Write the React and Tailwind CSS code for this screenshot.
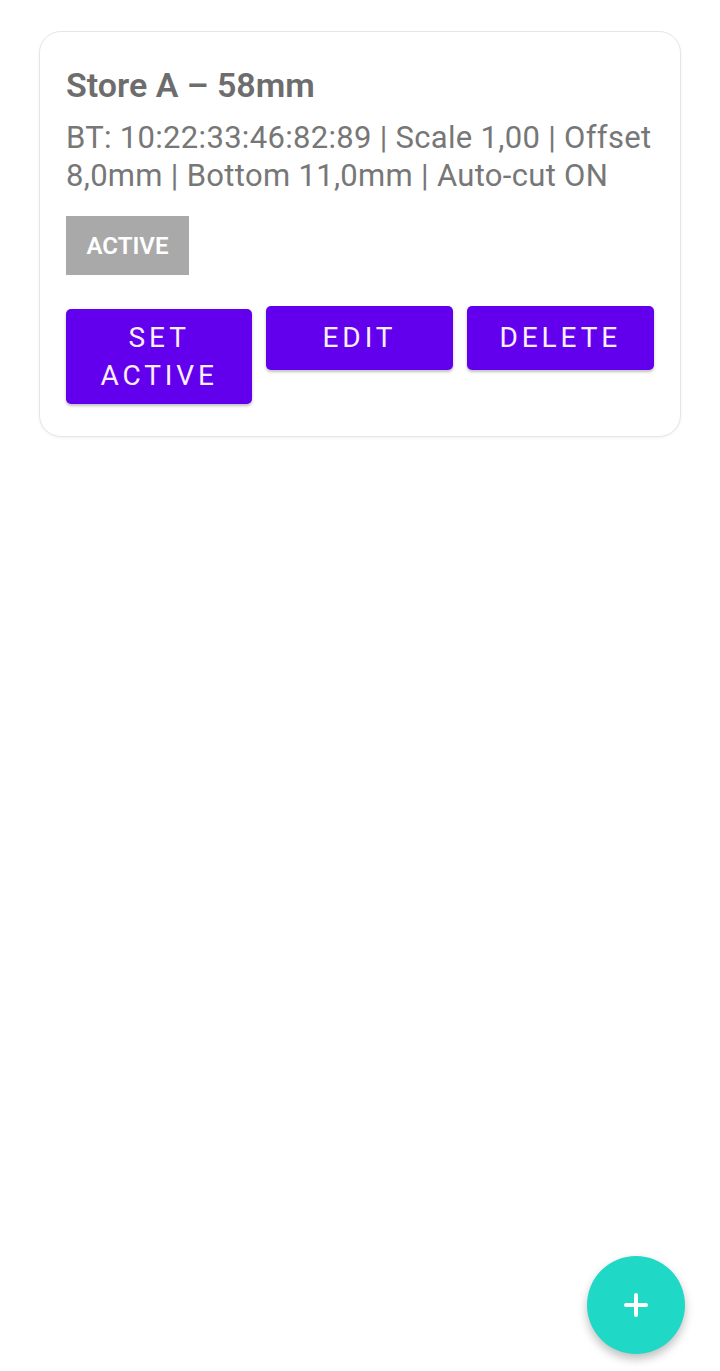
export default function App() {
  return (
    <div className="relative min-h-[1371px] bg-white" style={{ fontFamily: "Roboto, 'Noto Sans', sans-serif" }}>
      <div className="pt-[31px] pl-[39px]">
        <div className="w-[642px] rounded-[22px] border border-[#e6e6e6] bg-white px-[26px] pt-[25px] pb-[32px] shadow-[0_1px_3px_rgba(0,0,0,0.06)]">
          <h2 className="text-[34px] leading-[56px] font-semibold text-[#6d6d6d]">Store A – 58mm</h2>
          <p className="mt-[6px] text-[31px] leading-[38px] tracking-[0.01em] text-[#777777]">
            BT: 10:22:33:46:82:89 | Scale 1,00 | Offset 8,0mm | Bottom 11,0mm | Auto-cut ON
          </p>
          <div className="mt-[21px] inline-flex h-[59px] w-[123px] items-center justify-center bg-[#a9a9a9] text-[24px] font-semibold text-white">
            ACTIVE
          </div>
          <div className="mt-[31px] flex items-start gap-[14px]">
            <button className="mt-[3px] flex h-[95px] w-[187px] flex-col items-center justify-center rounded-[5px] bg-[#6200ee] text-[28px] leading-[38px] tracking-[0.14em] text-[#fbeeff] shadow-[0_2px_3px_rgba(0,0,0,0.25)]">
              <span>SET</span>
              <span>ACTIVE</span>
            </button>
            <button className="h-[64px] w-[187px] rounded-[5px] bg-[#6200ee] text-[28px] tracking-[0.14em] text-[#fbeeff] shadow-[0_2px_3px_rgba(0,0,0,0.25)]">
              EDIT
            </button>
            <button className="h-[64px] w-[188px] rounded-[5px] bg-[#6200ee] text-[28px] tracking-[0.14em] text-[#fbeeff] shadow-[0_2px_3px_rgba(0,0,0,0.25)]">
              DELETE
            </button>
          </div>
        </div>
      </div>
      <button className="absolute left-[587px] top-[1256px] flex h-[98px] w-[98px] items-center justify-center rounded-full bg-[#1fd8c6] shadow-[0_5px_10px_rgba(0,0,0,0.25)]">
        <svg width="24" height="24" viewBox="0 0 24 24" fill="none" stroke="white" strokeWidth="4" strokeLinecap="round">
          <path d="M12 2v20M2 12h20" />
        </svg>
      </button>
    </div>
  );
}
